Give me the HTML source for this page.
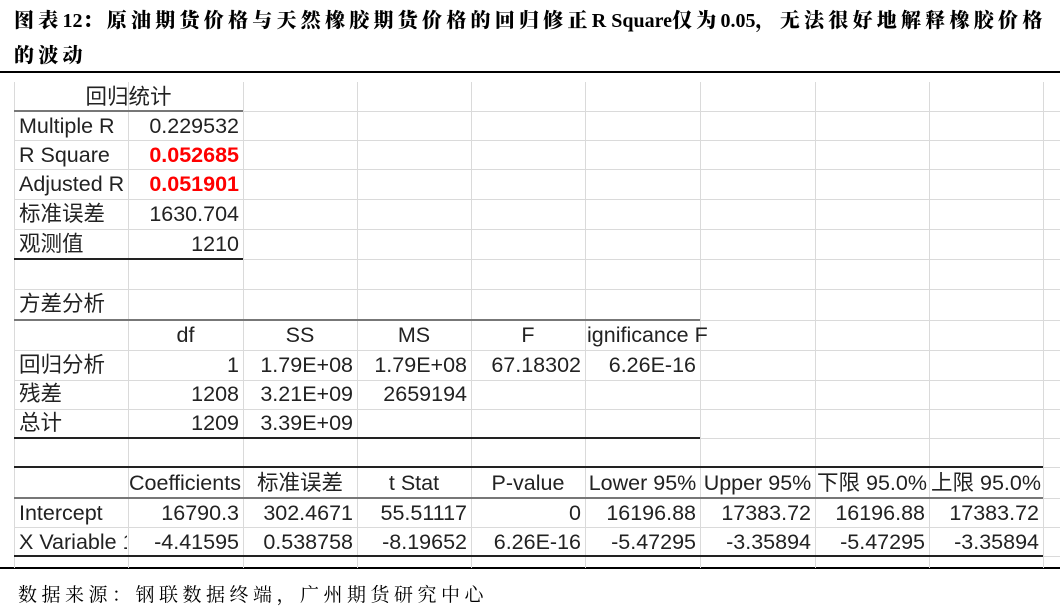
<!DOCTYPE html><html><head><meta charset="utf-8"><style>
body{margin:0;width:1060px;height:610px;background:#fff;position:relative;overflow:hidden;font-family:"Liberation Sans","Noto Sans CJK SC",sans-serif}
.t{position:absolute;left:14px;font-family:"Liberation Serif","Noto Serif CJK SC",serif;font-weight:bold;font-size:20px;color:#000;white-space:nowrap}
.t b{letter-spacing:4.25px}
.h{position:absolute;height:1px;background:#dadada}
.v{position:absolute;width:1px;background:#dadada;top:82px;height:486px}
.k{position:absolute;height:2px;background:#222}
.c{position:absolute;font-size:21.5px;color:#222;white-space:nowrap;height:29px;line-height:29px;overflow:hidden;box-sizing:border-box}
.l{text-align:left;padding-left:5px}
.r{text-align:right;padding-right:4px}
.m{text-align:center}
.red{color:#f00;font-weight:bold}
</style></head><body>
<div class="t" style="top:4px"><b>图表</b>12<b>：原油期货价格与天然橡胶期货价格的回归修正</b>R Square<b>仅为</b>0.05<b>，无法很好地解释橡胶价格</b></div>
<div class="t" style="top:39px"><b>的波动</b></div>
<div style="position:absolute;left:0;top:71px;width:1060px;height:2px;background:#000"></div>
<div style="position:absolute;left:0;top:567px;width:1060px;height:2px;background:#000"></div>
<div style="position:absolute;left:18px;top:580px;font-family:'Liberation Serif','Noto Serif CJK SC',serif;font-size:19px;letter-spacing:4.5px;white-space:nowrap;color:#000">数据来源：钢联数据终端，广州期货研究中心</div>

<div class="v" style="left:14px"></div><div class="v" style="left:128px"></div><div class="v" style="left:243px"></div><div class="v" style="left:357px"></div><div class="v" style="left:471px"></div><div class="v" style="left:585px"></div><div class="v" style="left:700px"></div><div class="v" style="left:815px"></div><div class="v" style="left:929px"></div><div class="v" style="left:1043px"></div>
<div class="h" style="left:14px;width:1046px;top:111px"></div>
<div class="h" style="left:14px;width:1046px;top:140px"></div>
<div class="h" style="left:14px;width:1046px;top:169px"></div>
<div class="h" style="left:14px;width:1046px;top:199px"></div>
<div class="h" style="left:14px;width:1046px;top:229px"></div>
<div class="h" style="left:14px;width:1046px;top:259px"></div>
<div class="h" style="left:14px;width:1046px;top:289px"></div>
<div class="h" style="left:14px;width:1046px;top:320px"></div>
<div class="h" style="left:14px;width:1046px;top:350px"></div>
<div class="h" style="left:14px;width:1046px;top:380px"></div>
<div class="h" style="left:14px;width:1046px;top:409px"></div>
<div class="h" style="left:14px;width:1046px;top:438px"></div>
<div class="h" style="left:14px;width:1046px;top:467px"></div>
<div class="h" style="left:14px;width:1046px;top:498px"></div>
<div class="h" style="left:14px;width:1046px;top:527px"></div>
<div class="h" style="left:14px;width:1046px;top:556px"></div>
<div class="k" style="left:14px;width:229px;top:110px;background:#777"></div>
<div class="k" style="left:14px;width:229px;top:258px"></div>
<div class="k" style="left:14px;width:686px;top:319px;background:#777"></div>
<div class="k" style="left:14px;width:686px;top:437px"></div>
<div class="k" style="left:14px;width:1029px;top:466px"></div>
<div class="k" style="left:14px;width:1029px;top:497px;background:#777"></div>

<div class="c m" style="left:14px;width:229px;top:83px">回归统计</div>
<div class="c l" style="left:14px;width:114px;top:112px">Multiple R</div><div class="c r" style="left:128px;width:115px;top:112px">0.229532</div>
<div class="c l" style="left:14px;width:114px;top:141px">R Square</div><div class="c r red" style="left:128px;width:115px;top:141px">0.052685</div>
<div class="c l" style="left:14px;width:114px;top:170px">Adjusted R</div><div class="c r red" style="left:128px;width:115px;top:170px">0.051901</div>
<div class="c l" style="left:14px;width:114px;top:200px">标准误差</div><div class="c r" style="left:128px;width:115px;top:200px">1630.704</div>
<div class="c l" style="left:14px;width:114px;top:230px">观测值</div><div class="c r" style="left:128px;width:115px;top:230px">1210</div>

<div class="c l" style="left:14px;width:200px;top:290px">方差分析</div>
<div class="c m" style="left:128px;width:115px;top:321px">df</div>
<div class="c m" style="left:243px;width:114px;top:321px">SS</div>
<div class="c m" style="left:357px;width:114px;top:321px">MS</div>
<div class="c m" style="left:471px;width:114px;top:321px">F</div>
<div class="c" style="left:587px;width:140px;top:321px">ignificance F</div>
<div class="c l" style="left:14px;width:114px;top:351px">回归分析</div><div class="c r" style="left:128px;width:115px;top:351px">1</div><div class="c r" style="left:243px;width:114px;top:351px">1.79E+08</div><div class="c r" style="left:357px;width:114px;top:351px">1.79E+08</div><div class="c r" style="left:471px;width:114px;top:351px">67.18302</div><div class="c r" style="left:585px;width:115px;top:351px">6.26E-16</div>
<div class="c l" style="left:14px;width:114px;top:380px">残差</div><div class="c r" style="left:128px;width:115px;top:380px">1208</div><div class="c r" style="left:243px;width:114px;top:380px">3.21E+09</div><div class="c r" style="left:357px;width:114px;top:380px">2659194</div>
<div class="c l" style="left:14px;width:114px;top:409px">总计</div><div class="c r" style="left:128px;width:115px;top:409px">1209</div><div class="c r" style="left:243px;width:114px;top:409px">3.39E+09</div>

<div class="c" style="left:128px;width:120px;top:469px;padding-left:1px">Coefficients</div>
<div class="c m" style="left:243px;width:114px;top:469px">标准误差</div>
<div class="c m" style="left:357px;width:114px;top:469px">t Stat</div>
<div class="c m" style="left:471px;width:114px;top:469px">P-value</div>
<div class="c m" style="left:585px;width:115px;top:469px">Lower 95%</div>
<div class="c m" style="left:700px;width:115px;top:469px">Upper 95%</div>
<div class="c m" style="left:815px;width:114px;top:469px">下限 95.0%</div>
<div class="c m" style="left:929px;width:114px;top:469px">上限 95.0%</div>
<div class="c l" style="left:14px;width:114px;top:499px">Intercept</div><div class="c r" style="left:128px;width:115px;top:499px">16790.3</div><div class="c r" style="left:243px;width:114px;top:499px">302.4671</div><div class="c r" style="left:357px;width:114px;top:499px">55.51117</div><div class="c r" style="left:471px;width:114px;top:499px">0</div><div class="c r" style="left:585px;width:115px;top:499px">16196.88</div><div class="c r" style="left:700px;width:115px;top:499px">17383.72</div><div class="c r" style="left:815px;width:114px;top:499px">16196.88</div><div class="c r" style="left:929px;width:114px;top:499px">17383.72</div>
<div class="c l" style="left:14px;width:113px;top:528px">X Variable 1</div><div class="c r" style="left:128px;width:115px;top:528px">-4.41595</div><div class="c r" style="left:243px;width:114px;top:528px">0.538758</div><div class="c r" style="left:357px;width:114px;top:528px">-8.19652</div><div class="c r" style="left:471px;width:114px;top:528px">6.26E-16</div><div class="c r" style="left:585px;width:115px;top:528px">-5.47295</div><div class="c r" style="left:700px;width:115px;top:528px">-3.35894</div><div class="c r" style="left:815px;width:114px;top:528px">-5.47295</div><div class="c r" style="left:929px;width:114px;top:528px">-3.35894</div>
<div class="k" style="left:14px;width:1029px;top:555px"></div>
</body></html>
